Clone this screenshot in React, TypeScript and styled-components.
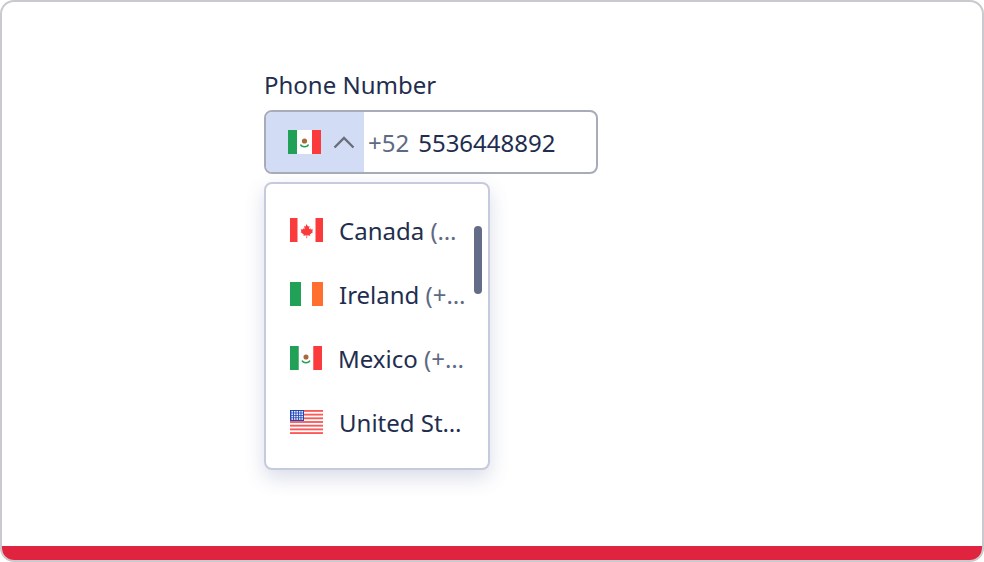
import React from "react";
import styled, { createGlobalStyle } from "styled-components";

const Global = createGlobalStyle`
  html, body { margin: 0; padding: 0; background: #fff; }
  body { font-family: "Noto Sans", "Open Sans", sans-serif; color: #1f2e4f; }
  * { box-sizing: border-box; }
`;

const Frame = styled.div`
  width: 984px;
  height: 562px;
  border: 2px solid #c9cacd;
  border-radius: 14px;
  overflow: hidden;
  display: flex;
  flex-direction: column;
  background: #fff;
`;
const Content = styled.main`
  flex: 1;
  padding: 66px 0 0 262px;
`;
const Bar = styled.div`
  height: 14px;
  background: #e0233f;
`;
const Field = styled.div`
  position: relative;
  width: 334px;
`;
const Label = styled.label`
  display: block;
  font-size: 24px;
  line-height: 33px;
  margin-bottom: 9px;
  color: #1f2e4f;
`;
const InputBox = styled.div`
  height: 64px;
  border: 2px solid #a8abb8;
  border-radius: 8px;
  overflow: hidden;
  display: flex;
  align-items: center;
`;
const Trigger = styled.button`
  width: 98px;
  height: 100%;
  border: 0;
  padding: 0 0 0 22px;
  background: #d2dcf5;
  display: flex;
  align-items: center;
  gap: 11px;
`;
const Prefix = styled.span`
  font-size: 24px;
  color: #5e6a84;
  margin-left: 4px;
`;
const PhoneValue = styled.span`
  font-size: 24px;
  color: #1f2e4f;
  margin-left: 9px;
`;
const Menu = styled.ul`
  position: absolute;
  left: 0;
  top: 114px;
  width: 226px;
  height: 288px;
  margin: 0;
  padding: 14px 0 0;
  list-style: none;
  background: #fff;
  border: 2px solid #c5cbdd;
  border-radius: 8px;
  box-shadow: 0 8px 20px rgba(70, 85, 140, 0.2);
`;
const Item = styled.li`
  height: 64px;
  display: flex;
  align-items: center;
  padding-left: 24px;
  gap: 16px;
`;
const Name = styled.span<{ $dark?: boolean }>`
  width: 127px;
  font-size: 24px;
  line-height: 33px;
  white-space: nowrap;
  overflow: hidden;
  text-overflow: ellipsis;
  color: ${(p) => (p.$dark ? "#1f2e4f" : "#5e6a84")};
`;
const Country = styled.span`
  color: #1f2e4f;
`;
const Thumb = styled.li`
  position: absolute;
  right: 6px;
  top: 42px;
  width: 8px;
  height: 68px;
  border-radius: 4px;
  background: #636d87;
`;

const Flag = styled.svg<{ $w?: number }>`
  display: block;
  flex: none;
  width: ${(p) => p.$w ?? 33}px;
  height: 24px;
`;

const Mexico = ({ w }: { w?: number }) => (
  <Flag $w={w} viewBox="0 0 33 24" preserveAspectRatio="none">
    <rect width="33" height="24" fill="#fff" />
    <rect width="9" height="24" fill="#21a057" />
    <rect x="24" width="9" height="24" fill="#fb3a3c" />
    <circle cx="16.5" cy="11" r="2.6" fill="#a86a3c" />
    <path d="M12.5 14.5c1 3 7 3 8 0" fill="none" stroke="#21a057" strokeWidth="1.4" />
  </Flag>
);
const Canada = () => (
  <Flag viewBox="0 0 33 24">
    <rect width="33" height="24" fill="#fff" />
    <rect width="7.5" height="24" fill="#fb3a3c" />
    <rect x="25.5" width="7.5" height="24" fill="#fb3a3c" />
    <path
      d="M16.5 6l1.5 2.6 1.5-.7-.6 3.4 1.5-1 .5 1.3 2-.3-.7 2.1.9.5-3.2 2.6.3 1.2-3.1-.4.1 3h-.8l.1-3-3.1.4.3-1.2-3.2-2.6.9-.5-.7-2.1 2 .3.5-1.3 1.5 1-.6-3.4 1.5.7z"
      fill="#fb3a3c"
    />
  </Flag>
);
const Ireland = () => (
  <Flag viewBox="0 0 33 24">
    <rect width="33" height="24" fill="#fff" />
    <rect width="11" height="24" fill="#21a057" />
    <rect x="22" width="11" height="24" fill="#ff6f2d" />
  </Flag>
);
const stripes = [0, 2, 4, 6, 8, 10, 12];
const dots = Array.from({ length: 20 }, (_, i) => ({
  x: 1.4 + (i % 5) * 2.5,
  y: 1 + Math.floor(i / 5) * 2.4,
}));
const USA = () => (
  <Flag viewBox="0 0 33 24">
    <rect width="33" height="24" fill="#fff" />
    {stripes.map((s) => (
      <rect key={s} y={(s * 24) / 13} width="33" height={24 / 13} fill="#fb3a3c" fillOpacity="0.85" />
    ))}
    <rect width="14" height="11" fill="#2447b8" />
    {dots.map((d, i) => (
      <rect key={i} x={d.x} y={d.y} width="1.6" height="1.6" fill="#e6ecfb" />
    ))}
  </Flag>
);

const Chevron = () => (
  <svg width="24" height="24" viewBox="0 0 24 24" fill="none" stroke="#6a6e79" strokeWidth="2.4" style={{ flex: "none" }}>
    <path d="M2.5 17.5 L12 8 L21.5 17.5" />
  </svg>
);

export default function App() {
  return (
    <Frame>
      <Global />
      <Content>
        <Field>
          <Label>Phone Number</Label>
          <InputBox>
            <Trigger>
              <Mexico />
              <Chevron />
            </Trigger>
            <Prefix>+52</Prefix>
            <PhoneValue>5536448892</PhoneValue>
          </InputBox>
          <Menu>
            <Item><Canada /><Name><Country>Canada</Country> (+1)</Name></Item>
            <Item><Ireland /><Name><Country>Ireland</Country> (+353)</Name></Item>
            <Item><Mexico w={32} /><Name><Country>Mexico</Country> (+52)</Name></Item>
            <Item><USA /><Name $dark><Country>United States</Country> (+1)</Name></Item>
            <Thumb />
          </Menu>
        </Field>
      </Content>
      <Bar />
    </Frame>
  );
}
